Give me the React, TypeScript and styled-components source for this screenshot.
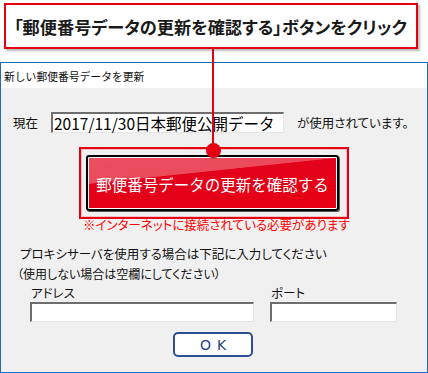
import React from "react";
import styled, { createGlobalStyle } from "styled-components";

const RED = "#e60012";
const FONT = `"Noto Sans CJK JP", "Noto Sans", sans-serif`;

const GlobalStyle = createGlobalStyle`
  html, body {
    margin: 0;
    padding: 0;
    background: #ffffff;
  }
  body {
    font-family: ${FONT};
    color: #000;
  }
`;

const App = () => {
  return (
    <Page>
      <GlobalStyle />
      <Callout>
        <CalloutText>「郵便番号データの更新を確認する」ボタンをクリック</CalloutText>
      </Callout>
      <Dialog>
        <TitleBar>新しい郵便番号データを更新</TitleBar>
        <Body>
          <CurrentRow>
            <Label>現在</Label>
            <Field width={233} height={21}>
              <FieldText>2017/11/30日本郵便公開データ</FieldText>
            </Field>
            <Label>が使用されています。</Label>
          </CurrentRow>
          <Highlight>
            <BigButton>郵便番号データの更新を確認する</BigButton>
          </Highlight>
          <Warning>※インターネットに接続されている必要があります</Warning>
          <Note>プロキシサーバを使用する場合は下記に入力してください</Note>
          <Note small>（使用しない場合は空欄にしてください）</Note>
          <ProxyRow>
            <ProxyField>
              <FieldLabel>アドレス</FieldLabel>
              <Field width={224} height={20} />
            </ProxyField>
            <ProxyField>
              <FieldLabel>ポート</FieldLabel>
              <Field width={127} height={20} />
            </ProxyField>
          </ProxyRow>
          <OkButton>OK</OkButton>
        </Body>
      </Dialog>
      <Connector />
      <Dot />
    </Page>
  );
};

export default App;

const Page = styled.div`
  position: relative;
  width: 428px;
  height: 373px;
  overflow: hidden;
  padding-top: 3px;
  box-sizing: border-box;
`;

const Callout = styled.div`
  margin-left: 4px;
  width: 414px;
  height: 46px;
  box-sizing: border-box;
  border: 2px solid ${RED};
  background: #fff;
  box-shadow: 2px 2px 2px rgba(0, 0, 0, 0.28);
  display: flex;
  align-items: center;
  padding-left: 8px;
`;

const CalloutText = styled.span`
  font-size: 17.2px;
  font-weight: 700;
  font-feature-settings: "palt";
  white-space: nowrap;
  color: #1a1a1a;
`;

const Dialog = styled.div`
  margin-top: 13px;
  width: 428px;
  height: 311px;
  box-sizing: border-box;
  border: 1px solid #1c6cb8;
  display: flex;
  flex-direction: column;
`;

const TitleBar = styled.div`
  height: 25px;
  flex: none;
  background: #fff;
  display: flex;
  align-items: center;
  padding-left: 3px;
  font-size: 10.8px;
  color: #111;
`;

const Body = styled.div`
  flex: 1;
  background: #f0f0f0;
  display: flex;
  flex-direction: column;
  padding-top: 24px;
`;

const CurrentRow = styled.div`
  display: flex;
  align-items: center;
  padding-left: 12px;
  gap: 13px;
`;

const Label = styled.span`
  font-size: 12.5px;
  font-feature-settings: "palt";
  white-space: nowrap;
  color: #111;
`;

const Field = styled.div<{ width: number; height: number }>`
  width: ${(p) => p.width}px;
  height: ${(p) => p.height}px;
  box-sizing: border-box;
  background: #fff;
  border-style: solid;
  border-width: 2px 1px 1px 2px;
  border-color: #6e6e6e #e4e4e4 #e4e4e4 #6e6e6e;
  display: flex;
  align-items: center;
`;

const FieldText = styled.span`
  font-size: 15.5px;
  padding-left: 1px;
  white-space: nowrap;
  color: #000;
`;

const Highlight = styled.div`
  align-self: flex-start;
  margin: 14px 0 0 78px;
  border: 2px solid ${RED};
  box-shadow: inset 0 0 0 1px #f6c3c8;
  padding: 6px 8px 6px 5px;
`;

const BigButton = styled.div`
  width: 253px;
  height: 56px;
  box-sizing: border-box;
  border: 2px solid #000;
  border-radius: 3px;
  box-shadow: inset 0 0 0 1px #fff, 1px 1px 0 #555;
  background: linear-gradient(174deg, #ec4f60 0%, #eb4a5b 34%, #e3001b 35%, #e60012 100%);
  color: #fff;
  font-size: 15.5px;
  font-weight: 400;
  display: flex;
  align-items: center;
  justify-content: center;
  padding-top: 2px;
  white-space: nowrap;
`;

const Warning = styled.div`
  margin: -1px 0 0 82px;
  font-size: 12.5px;
  line-height: 14px;
  color: #ff0000;
  font-feature-settings: "palt";
  white-space: nowrap;
`;

const Note = styled.div<{ small?: boolean }>`
  margin: ${(p) => (p.small ? "5px 0 0 16px" : "14px 0 0 19px")};
  font-size: ${(p) => (p.small ? "12px" : "12.5px")};
  line-height: 15px;
  font-feature-settings: "palt";
  white-space: nowrap;
  color: #111;
`;

const ProxyRow = styled.div`
  display: flex;
  margin: 4px 0 0 29px;
  gap: 16px;
`;

const ProxyField = styled.div`
  display: flex;
  flex-direction: column;
`;

const FieldLabel = styled.div`
  font-size: 12.5px;
  line-height: 16px;
  height: 17px;
  padding-left: 1px;
  font-feature-settings: "palt";
  color: #111;
`;

const OkButton = styled.div`
  align-self: flex-start;
  margin: 10px 0 0 172px;
  width: 80px;
  height: 25px;
  box-sizing: border-box;
  border: 2px solid #2b4f8f;
  border-radius: 5px;
  background: #fff;
  color: #24467f;
  font-family: "DejaVu Sans", sans-serif;
  font-size: 14px;
  font-weight: 400;
  letter-spacing: 6px;
  padding-left: 6px;
  display: flex;
  align-items: center;
  justify-content: center;
`;

const Connector = styled.div`
  position: absolute;
  left: 212px;
  top: 49px;
  width: 2px;
  height: 100px;
  background: ${RED};
`;

const Dot = styled.div`
  position: absolute;
  left: 206px;
  top: 143px;
  width: 15px;
  height: 15px;
  border-radius: 50%;
  background: ${RED};
  box-shadow: 0 1px 1px rgba(0, 0, 0, 0.25);
`;
